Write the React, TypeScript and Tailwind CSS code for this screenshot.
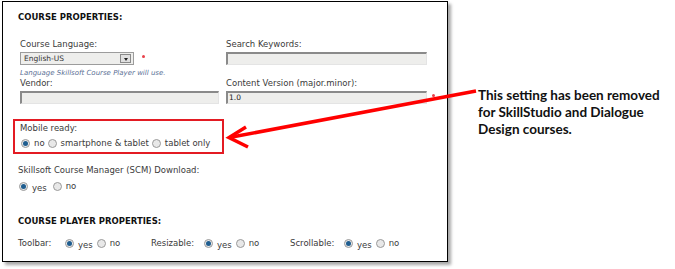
const font = "font-['DejaVu_Sans','Verdana',sans-serif]";

function Radio({ checked = false }: { checked?: boolean }) {
  return (
    <span className="inline-flex h-[9px] w-[9px] shrink-0 items-center justify-center rounded-full border border-[#9a9a9a] bg-[#e8e8e8]">
      {checked && <span className="h-[5px] w-[5px] rounded-full bg-[#1f5d8f]" />}
    </span>
  );
}

function Option({ label, checked = false, low = false }: { label: string; checked?: boolean; low?: boolean }) {
  return (
    <span className="inline-flex items-center gap-[4px]">
      <Radio checked={checked} />
      <span className={low ? "translate-y-[2px]" : ""}>{label}</span>
    </span>
  );
}

function Field({ value = "", width }: { value?: string; width: string }) {
  return (
    <div
      className={`${width} h-[13px] border-t-2 border-l-2 border-r border-b border-t-[#8a8a8a] border-l-[#8a8a8a] border-r-[#e4e4e4] border-b-[#e4e4e4] bg-[#eeeeec] pl-[1px] text-[7.5px] leading-[10px] text-[#222] font-['DejaVu_Sans',sans-serif]`}
    >
      {value}
    </div>
  );
}

function Star({ gap = "ml-[8px]" }: { gap?: string }) {
  return <span className={`${gap} mt-[3px] h-[3px] w-[3px] rounded-full bg-[#e8414a]`} />;
}

export default function App() {
  return (
    <div className="relative flex h-[269px] w-[675px] overflow-hidden bg-white">
      <div
        className={`${font} ml-[2px] mt-[1px] flex h-[261px] w-[446px] shrink-0 flex-col border-[1.5px] border-black bg-white pl-[15px] text-[8.5px] text-[#3a3a3a] shadow-[3px_3px_3px_rgba(0,0,0,0.35)]`}
      >
        <div className="mt-[9px] text-[8.5px] font-bold text-[#111]">COURSE PROPERTIES:</div>

        <div className="mt-[15px] flex gap-[7px] pl-[2px]">
          <div className="flex w-[199px] flex-col">
            <div className="leading-[11px]">Course Language:</div>
            <div className="mt-[2px] flex items-start">
              <div className="flex h-[13px] w-[114px] items-center justify-between border border-[#9c9c9c] bg-[#eeeeec] pl-[3px] pr-[2px] text-[7.5px] text-[#333]">
                <span>English-US</span>
                <span className="flex h-[9px] w-[11px] items-end justify-center border border-[#8a8a8a] bg-[#e0e0e0] pb-[1px]">
                  <span className="h-0 w-0 border-l-[2.5px] border-r-[2.5px] border-t-[3px] border-l-transparent border-r-transparent border-t-[#222]" />
                </span>
              </div>
              <Star />
            </div>
            <div className="mt-[3px] text-[7px] italic leading-[10px] text-[#5a6f95]">Language Skillsoft Course Player will use.</div>
            <div className="leading-[11px]">Vendor:</div>
            <div className="mt-[2px]">
              <Field width="w-[199px]" />
            </div>
          </div>
          <div className="flex flex-col">
            <div className="leading-[11px]">Search Keywords:</div>
            <div className="mt-[2px]">
              <Field width="w-[201px]" />
            </div>
            <div className="mt-[13px] leading-[11px]">Content Version (major.minor):</div>
            <div className="mt-[2px] flex items-start">
              <Field width="w-[201px]" value="1.0" />
              <Star gap="ml-[5px]" />
            </div>
          </div>
        </div>

        <div className="ml-[-5px] mt-[15px] flex h-[35px] w-[211px] flex-col border-2 border-[#e31b23] pl-[5px] pt-[2px]">
          <div className="leading-[11px]">Mobile ready:</div>
          <div className="mt-[3px] flex items-center gap-[3px] pl-[1px]">
            <Option label="no" checked />
            <Option label="smartphone & tablet" />
            <Option label="tablet only" />
          </div>
        </div>

        <div className="mt-[11px] leading-[11px]">Skillsoft Course Manager (SCM) Download:</div>
        <div className="mt-[4px] flex items-center gap-[6px] pl-[1px]">
          <Option label="yes" checked low />
          <Option label="no" />
        </div>

        <div className="mt-[22px] font-bold text-[#111]">COURSE PLAYER PROPERTIES:</div>

        <div className="mt-[10px] flex items-center">
          <span className="w-[47px]">Toolbar:</span>
          <span className="flex w-[86px] items-center gap-[4px]">
            <Option label="yes" checked low />
            <Option label="no" />
          </span>
          <span className="w-[53px]">Resizable:</span>
          <span className="flex w-[86px] items-center gap-[4px]">
            <Option label="yes" checked low />
            <Option label="no" />
          </span>
          <span className="w-[54px]">Scrollable:</span>
          <span className="flex items-center gap-[4px]">
            <Option label="yes" checked low />
            <Option label="no" />
          </span>
        </div>
      </div>

      <div className="ml-[30px] mt-[87px] font-['Lato',sans-serif] text-[13.5px] font-bold leading-[17px] text-[#111]">
        This setting has been removed
        <br />
        for SkillStudio and Dialogue
        <br />
        Design courses.
      </div>

      <svg className="pointer-events-none absolute left-0 top-0" width="675" height="269">
        <line x1="476" y1="91" x2="232" y2="137" stroke="#ff0000" strokeWidth="3.5" />
        <polyline points="246,127 229,137.5 248,147" fill="none" stroke="#ff0000" strokeWidth="3.5" strokeLinejoin="miter" />
      </svg>
    </div>
  );
}
